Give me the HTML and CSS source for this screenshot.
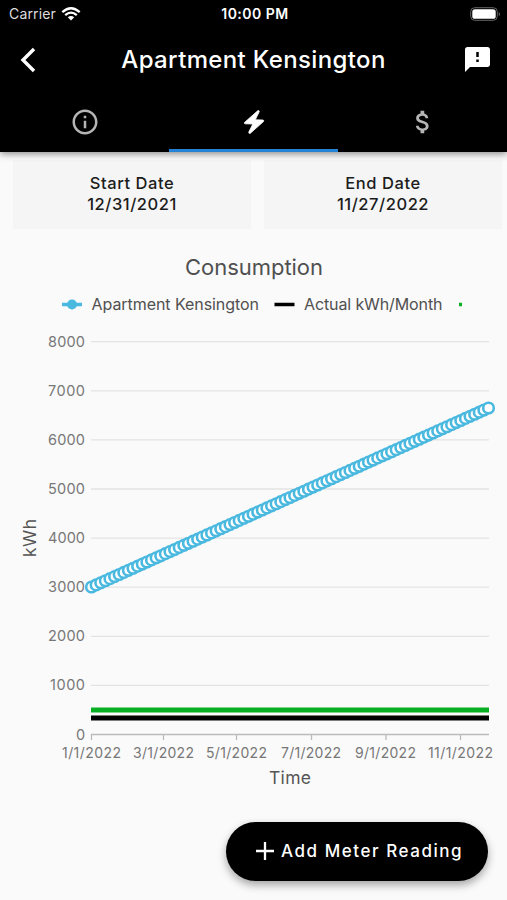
FILE: index.html
```html
<!DOCTYPE html>
<html lang="en">
<head>
<meta charset="utf-8">
<title>Apartment Kensington</title>
<link rel="stylesheet" href="styles.css">
</head>
<body>
<header class="app-header">
  <div class="status-bar">
    <div class="carrier"><span>Carrier</span>
      <svg width="20" height="14" viewBox="0 0 20 14" fill="none" stroke="#fff" stroke-width="2.3"><path d="M1.3 5.2Q10-2.6 18.7 5.2M4.2 8.2Q10 3 15.8 8.2"/><path d="M10 13.5L6.8 10.3Q10 7.700 13.200 10.300Z" fill="#fff" stroke="none"/></svg>
    </div>
    <span class="clock">10:00 PM</span>
    <svg class="battery" width="31" height="14" viewBox="0 0 31 14"><rect x=".7" y=".7" width="26.600" height="12.600" rx="4" fill="none" stroke="#666"/><rect x="2.300" y="2.200" width="23.400" height="9.600" rx="2.600" fill="#fff"/><path d="M28.800 4.700Q31 7 28.800 9.300Z" fill="#777"/></svg>
  </div>
  <div class="title-bar">
    <svg class="back" width="16" height="26" viewBox="0 0 16 26"><path d="M14 2L3 13L14 24" fill="none" stroke="#fff" stroke-width="3.400"/></svg>
    <h1>Apartment Kensington</h1>
    <svg class="feedback" width="25" height="25" viewBox="2 2 20 20"><path fill="#fff" d="M20 2H4c-1.100 0-1.990.9-1.990 2L2 22l4-4h14c1.100 0 2-.9 2-2V4c0-1.100-.9-2-2-2zm-7 12h-2v-2h2v2zm0-4h-2V6h2v4z"/></svg>
  </div>
  <nav class="tabs">
    <div class="tab"><svg width="30" height="30" viewBox="0 0 24 24" fill="#b5b5b5"><path d="M11 7h2v2h-2zm0 4h2v6h-2zm1-9C6.480 2 2 6.480 2 12s4.480 10 10 10 10-4.480 10-10S17.520 2 12 2zm0 18c-4.410 0-8-3.590-8-8s3.590-8 8-8 8 3.590 8 8-3.590 8-8 8z"/></svg></div>
    <div class="tab active"><svg width="24" height="28" viewBox="0 0 24 28"><path d="M15.800 2.700L2.500 14.500Q2 15.700 3.200 15.800L10.800 16L6.700 24.300Q7 26 8.300 25.300L21.500 13.500Q22.200 12.300 21 12L13.300 11.800L17.300 3.600Q17 2 15.800 2.700Z" fill="#fff" stroke="#fff" stroke-width=".8"/></svg></div>
    <div class="tab"><svg width="30" height="30" viewBox="0 0 24 24" fill="#b5b5b5"><path d="M11.800 10.900c-2.270-.59-3-1.200-3-2.150 0-1.090 1.010-1.850 2.700-1.850 1.780 0 2.440.85 2.500 2.100h2.210c-.07-1.720-1.120-3.300-3.210-3.810V3h-3v2.160c-1.940.42-3.500 1.680-3.500 3.610 0 2.310 1.910 3.460 4.700 4.130 2.500.6 3 1.480 3 2.410 0 .69-.49 1.790-2.700 1.790-2.060 0-2.870-.92-2.980-2.100h-2.200c.12 2.190 1.760 3.420 3.680 3.830V21h3v-2.150c1.950-.37 3.500-1.500 3.500-3.550 0-2.840-2.430-3.810-4.700-4.400z"/></svg></div>
  </nav>
</header>
<main>
  <section class="dates">
    <div class="date-card"><span>Start Date</span><span>12/31/2021</span></div>
    <div class="date-card"><span>End Date</span><span>11/27/2022</span></div>
  </section>
  <svg class="chart" width="507" height="570" viewBox="0 230 507 570">
    <text class="chart-title" x="185" y="275" textLength="138">Consumption</text>
    <g class="legend">
      <path d="M62 304.500H82" stroke="#4bb9df" stroke-width="3.500"/><circle cx="72" cy="304.500" r="5" fill="#4bb9df"/>
      <text x="91.500" y="310" textLength="167.500">Apartment Kensington</text>
      <path d="M274.500 304.500H294.500" stroke="#000" stroke-width="3.500"/>
      <text x="304" y="310" textLength="138.500">Actual kWh/Month</text>
      <path d="M459 304.500H462" stroke="#08af22" stroke-width="3.500"/>
    </g>
    <g id="grid"></g>
    <path class="axis" d="M91 734.500H489M91.500 734V740M163.500 734V740M236.500 734V740M311.500 734V740M386 734V740M460.500 734V740"/>
    <g class="ticks" id="dates"></g>
    <path d="M91 710H489" stroke="#08af22" stroke-width="5"/>
    <path d="M91 718H489" stroke="#000" stroke-width="5"/>
    <path d="M91.500 587L488.500 408" stroke="#4bb9df" stroke-width="4"/>
    <g class="markers" id="markers"></g>
    <text class="axis-title" x="269" y="784" textLength="42">Time</text>
    <text class="axis-title" transform="translate(36 557) rotate(-90)" textLength="38">kWh</text>
  </svg>
</main>
<button class="add-button"><svg width="18" height="18" viewBox="0 0 18 18"><path d="M9 0V18M0 9H18" stroke="#fff" stroke-width="2.300"/></svg><span>Add Meter Reading</span></button>
<script src="chart.js"></script>
</body>
</html>
```
FILE: styles.css
```css
* { box-sizing: border-box; }
body { margin: 0; height: 900px; overflow: hidden; background: #fafafa; font-family: Inter, "Liberation Sans", sans-serif; color: #1c1c1c; }
.app-header { position: relative; height: 152px; background: #000; color: #fff; box-shadow: 0 2px 7px rgba(0,0,0,.45); }
.status-bar { display: grid; grid-template-columns: 1fr auto 1fr; align-items: center; height: 27px; padding: 0 6px 0 9px; font-size: 14px; }
.carrier { display: flex; align-items: center; gap: 5px; color: #ddd; letter-spacing: .15px; }
.clock { font-weight: 600; font-size: 14px; letter-spacing: .5px; }
.battery { justify-self: end; }
.title-bar { display: grid; grid-template-columns: 60px 1fr 60px; align-items: center; height: 65px; }
.back { margin-left: 20px; }
h1 { margin: 0; text-align: center; font-weight: 500; font-size: 24px; letter-spacing: .36px; white-space: nowrap; }
.feedback { margin-left: 18px; }
.tabs { display: grid; grid-template-columns: repeat(3, 1fr); height: 60px; }
.tab { display: flex; justify-content: center; align-items: center; padding-top: 2px; border-bottom: 3px solid transparent; }
.tab.active { border-color: #2583d5; }
.dates { display: grid; grid-template-columns: 238px 238px; gap: 13px; padding: 8px 5px 0 13px; height: 78px; }
.date-card { display: flex; flex-direction: column; align-items: center; justify-content: center; height: 69px; padding-bottom: 2px; background: #f5f5f5; font-size: 16.500px; font-weight: 500; line-height: 21px; letter-spacing: .55px; }
.chart { display: block; font-family: inherit; }
.chart-title { font-size: 22px; fill: #505050; }
.legend { font-size: 16px; fill: #505050; }
.ticks, .value { font-size: 14px; fill: #777; }
.value { font-size: 14.500px; }
.grid-line { stroke: #e3e3e3; stroke-width: 1.300; }
.axis { stroke: #bbb; stroke-width: 1.300; fill: none; }
.markers { fill: #fff; stroke: #4bb9df; stroke-width: 2.600; }
.axis-title { font-size: 17.500px; fill: #555; }
.add-button { position: absolute; left: 226px; top: 822px; width: 262px; height: 59px; display: flex; align-items: center; gap: 7px; padding: 0 0 1px 30px; border: 0; border-radius: 30px; background: #000; color: #fff; font: 500 17px Inter, sans-serif; letter-spacing: 1.550px; white-space: nowrap; box-shadow: 0 4px 8px rgba(0,0,0,.35); }
```
FILE: chart.js
```js
const NS = "http://www.w3.org/2000/svg";
function add(parent, tag, attrs, text) {
  const node = document.createElementNS(NS, tag);
  for (const key in attrs) node.setAttribute(key, attrs[key]);
  if (text) node.textContent = text;
  document.getElementById(parent).append(node);
}
for (let value = 0; value <= 8000; value += 1000) {
  const y = 734.5 - value * 0.0491;
  if (value) add("grid", "path", { class: "grid-line", d: `M91 ${y}H489` });
  const width = value === 1000 ? 35 : value ? 37 : 9;
  add("grid", "text", { class: "value", x: 85 - width, y: y + 5, textLength: width }, String(value));
}
const labels = [["1/1/2022", 62, 59], ["3/1/2022", 133, 61], ["5/1/2022", 206, 61], ["7/1/2022", 281, 60], ["9/1/2022", 355, 61], ["11/1/2022", 428, 65]];
for (const [label, x, width] of labels) add("dates", "text", { x, y: 757.5, textLength: width }, label);
const count = 86;
for (let i = 0; i <= count; i++) {
  add("markers", "circle", { cx: 91.5 + 397 * i / count, cy: 587 - 179 * i / count, r: 5.3 });
}
```
